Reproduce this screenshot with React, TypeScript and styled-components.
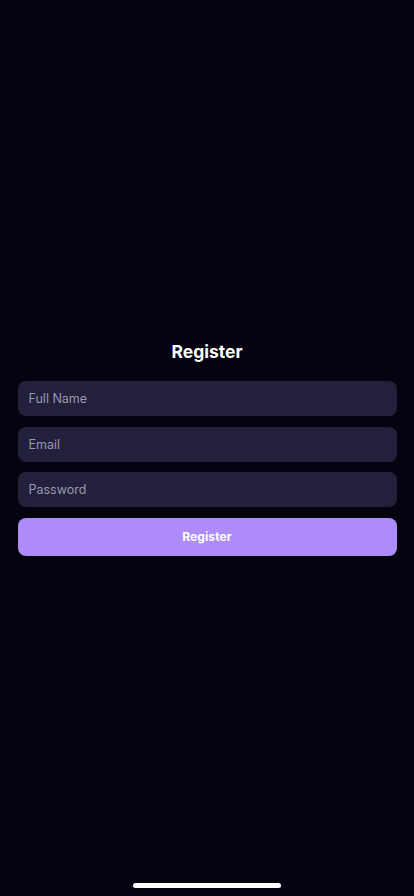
import React from "react";
import styled, { createGlobalStyle } from "styled-components";

const GlobalStyle = createGlobalStyle`
  html, body, #root { margin: 0; padding: 0; height: 100%; }
  body {
    background: #05030f;
    font-family: Inter, "Noto Sans", "Liberation Sans", sans-serif;
    -webkit-font-smoothing: antialiased;
  }
  * { box-sizing: border-box; }
`;

const Screen = styled.div`
  position: relative;
  width: 414px;
  height: 896px;
  background: #05030f;
  display: flex;
  flex-direction: column;
  justify-content: center;
  padding: 0 17.5px;
`;

const Title = styled.h1`
  margin: 0 0 17px;
  height: 24px;
  line-height: 24px;
  text-align: center;
  color: #ffffff;
  font-size: 17.5px;
  font-weight: 700;
`;

const Form = styled.form`
  display: flex;
  flex-direction: column;
  gap: 10.5px;
`;

const Field = styled.input`
  height: 35px;
  width: 100%;
  border: none;
  outline: none;
  border-radius: 8px;
  background: #22203b;
  padding: 0 11px;
  font-family: inherit;
  font-size: 12.5px;
  color: #ffffff;
  &::placeholder {
    color: #9b99ad;
  }
`;

const Button = styled.button`
  height: 38.5px;
  width: 100%;
  border: none;
  border-radius: 8px;
  background: #ad8cfa;
  color: #ffffff;
  font-family: inherit;
  font-size: 12px;
  font-weight: 700;
  letter-spacing: 0.1px;
  cursor: pointer;
`;

const HomeIndicator = styled.div`
  position: absolute;
  left: 133px;
  bottom: 8px;
  width: 148px;
  height: 5px;
  border-radius: 3px;
  background: #ffffff;
`;

export default function App() {
  return (
    <>
      <GlobalStyle />
      <Screen>
        <Title>Register</Title>
        <Form onSubmit={(e) => e.preventDefault()}>
          <Field type="text" placeholder="Full Name" />
          <Field type="email" placeholder="Email" />
          <Field type="password" placeholder="Password" />
          <Button type="submit">Register</Button>
        </Form>
        <HomeIndicator />
      </Screen>
    </>
  );
}
